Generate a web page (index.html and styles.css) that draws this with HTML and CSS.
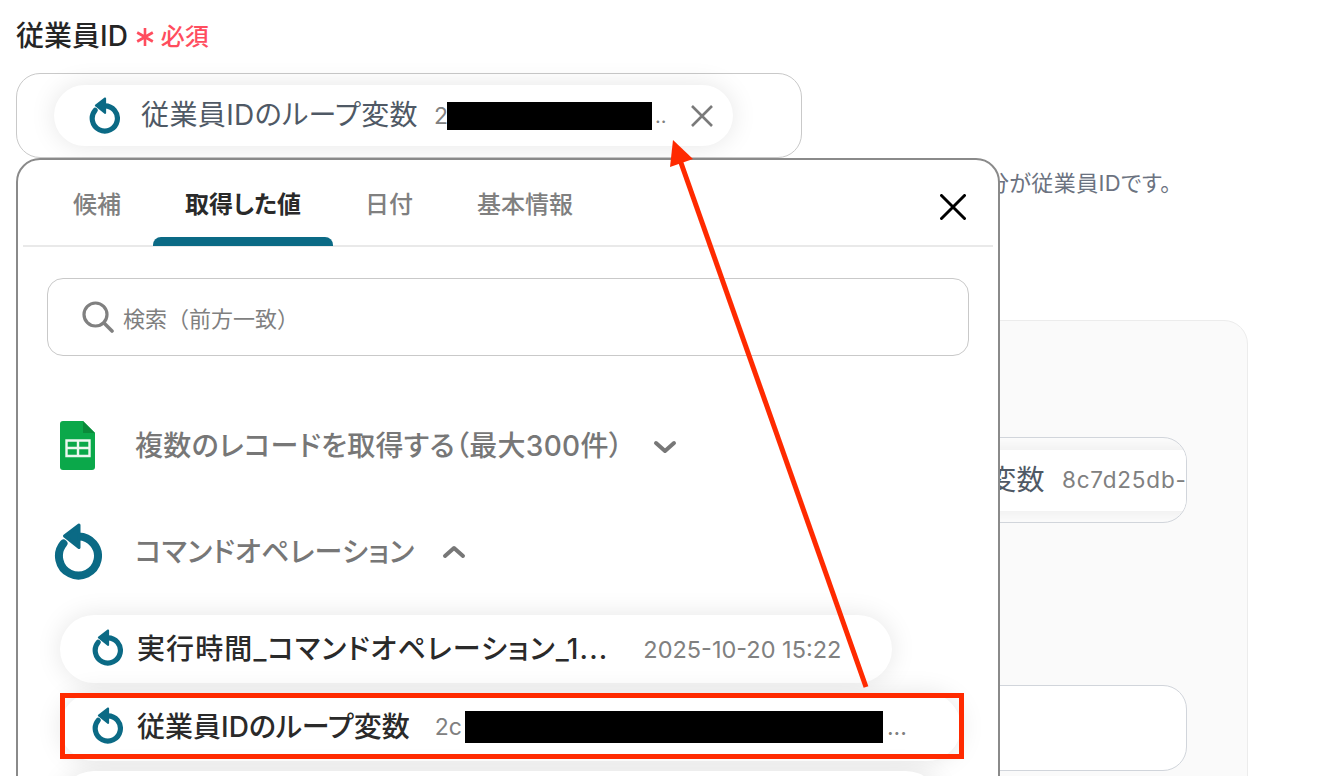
FILE: index.html
```html
<!DOCTYPE html>
<html lang="ja">
<head>
<meta charset="utf-8">
<title>従業員ID</title>
<link rel="stylesheet" href="styles.css">
</head>
<body>
<svg class="sprite" width="0" height="0" aria-hidden="true">
  <symbol id="loop" viewBox="0 0 48 57">
    <path d="M9.5 20.5A19.5 19.5 0 1 0 24 13.5" fill="none" stroke="currentColor" stroke-width="8" stroke-linecap="round"/>
    <path d="M25 2L10.500 13L25 24.500Z" fill="currentColor" stroke="currentColor" stroke-width="3" stroke-linejoin="round"/>
  </symbol>
</svg>
<main class="page">
  <div class="field-label">
    <span>従業員ID</span>
    <svg class="asterisk" viewBox="0 0 20 20"><path d="M10 1V19M2.200 5.500L17.800 14.500M17.800 5.500L2.200 14.500" stroke="currentColor" stroke-width="2.600"/></svg>
    <span class="required">必須</span>
  </div>
  <div class="input">
    <div class="chip">
      <svg class="chip-icon"><use href="#loop"/></svg>
      <span class="chip-name">従業員IDのループ変数</span>
      <span class="chip-value">2<i class="redact r1"></i><em>..</em></span>
      <svg class="chip-close" viewBox="0 0 24 24"><path d="M2 2L22 22M22 2L2 22" stroke="currentColor" stroke-width="2.600"/></svg>
    </div>
  </div>
  <p class="hint">分が従業員IDです。</p>
  <section class="panel">
    <div class="panel-input first">
      <div class="chip inner">
        <svg class="chip-icon"><use href="#loop"/></svg>
        <span class="chip-name">従業員IDのループ変数</span>
        <span class="chip-value plain">8c7d25db-</span>
      </div>
    </div>
    <div class="panel-input second"></div>
  </section>
</main>

<section class="popup">
  <header class="tabs">
    <span class="tab">候補</span>
    <span class="tab active">取得した値</span>
    <span class="tab">日付</span>
    <span class="tab">基本情報</span>
    <svg class="popup-close" viewBox="0 0 26 26"><path d="M1.500 1.500L24.500 24.500M24.500 1.500L1.500 24.500" stroke="currentColor" stroke-width="3" stroke-linecap="round"/></svg>
  </header>
  <div class="search">
    <svg class="search-icon" viewBox="0 0 32 32"><circle cx="13.500" cy="13.500" r="11.500" fill="none" stroke="currentColor" stroke-width="3.200"/><path d="M22 22L30 30" stroke="currentColor" stroke-width="3.600" stroke-linecap="round"/></svg>
    <span>検索（前方一致）</span>
  </div>
  <div class="group sheets">
    <svg class="sheet-icon" viewBox="0 0 35 49">
      <path d="M3 0H23L35 12V46A3 3 0 0 1 32 49H3A3 3 0 0 1 0 46V3A3 3 0 0 1 3 0Z" fill="#0ba84a"/>
      <path d="M23 0L35 12H23Z" fill="#0a8a3a"/>
      <path d="M6.500 19.500H29.500V35H6.500ZM18 19.500V35M6.500 27H29.500" fill="none" stroke="#eef8f1" stroke-width="2.400"/>
    </svg>
    <span class="group-name">複数のレコードを取得する（最大300件）</span>
    <svg class="chevron" viewBox="0 0 24 14"><path d="M3 3L12 11L21 3" fill="none" stroke="currentColor" stroke-width="4" stroke-linecap="round" stroke-linejoin="round"/></svg>
  </div>
  <div class="group command">
    <svg class="group-icon"><use href="#loop"/></svg>
    <span class="group-name">コマンドオペレーション</span>
    <svg class="chevron up" viewBox="0 0 24 14"><path d="M3 11L12 3L21 11" fill="none" stroke="currentColor" stroke-width="4" stroke-linecap="round" stroke-linejoin="round"/></svg>
  </div>
  <ul class="rows">
    <li class="row">
      <svg class="row-icon"><use href="#loop"/></svg>
      <span class="row-name short">実行時間_コマンドオペレーション_1...</span>
      <span class="row-value date">2025-10-20 15:22</span>
    </li>
    <li class="row wide">
      <svg class="row-icon"><use href="#loop"/></svg>
      <span class="row-name">従業員IDのループ変数</span>
      <span class="row-value">2c<i class="redact r2"></i><em>...</em></span>
    </li>
    <li class="row third"></li>
  </ul>
</section>

<div class="highlight"></div>
<svg class="arrow" viewBox="0 0 1330 776">
  <path d="M866 687L680 160" stroke="#ff2a00" stroke-width="5" fill="none"/>
  <path d="M673 140L670 167L693 159Z" fill="#ff2a00"/>
</svg>
</body>
</html>
```

FILE: styles.css
```css
* { box-sizing: border-box; }
html, body { margin: 0; height: 776px; overflow: hidden; background: #fff; }
body {
  position: relative;
  font-family: Inter, "Noto Sans CJK JP", sans-serif;
  font-feature-settings: "palt";
  color: #222;
}
.sprite { position: absolute; }
.page { padding: 12px 16px 0; }

.field-label {
  display: flex;
  align-items: center;
  height: 44px;
  font-size: 28px;
  font-weight: 500;
  color: #252525;
}
.asterisk { width: 20px; height: 20px; margin: 6px 0 0 7px; color: #ff4d5e; }
.required { margin-left: 6px; font-size: 24px; font-weight: 500; color: #ff4d5e; }

.input {
  display: flex;
  align-items: center;
  width: 786px;
  height: 85px;
  margin-top: 17px;
  padding-left: 37px;
  border: 1.5px solid #c9c9c9;
  border-radius: 24px;
}
.chip {
  display: flex;
  flex: none;
  align-items: center;
  width: 679px;
  height: 61px;
  padding-left: 35px;
  border-radius: 31px;
  background: #fff;
  box-shadow: 0 0 26px rgba(0, 0, 0, 0.1);
}
.chip-icon { flex: none; width: 31px; height: 37px; color: #0b6a85; }
.chip-name { margin: -5px 0 0 21px; font-size: 28px; letter-spacing: 0.4px; white-space: nowrap; color: #4f5965; }
.chip-value {
  display: flex;
  align-items: center;
  margin-left: 16px;
  font-size: 23px;
  color: #808080;
  white-space: nowrap;
}
.chip-value em { width: 21px; margin-left: 3px; font-style: normal; font-size: 20px; }
.chip-close { flex: none; width: 24px; height: 24px; margin-left: 14px; color: #7a7a7a; }
.redact { display: block; flex: none; background: #000; }
.r1 { width: 205px; height: 28px; margin-left: -1px; }
.r2 { width: 418px; height: 32px; margin-left: 3px; }

.hint {
  margin: 13px 0 0;
  padding-left: 971px;
  font-size: 22px;
  letter-spacing: 0.4px;
  line-height: 24px;
  color: #6b7280;
  white-space: nowrap;
}

.panel {
  width: 1232px;
  height: 600px;
  margin-top: 125px;
  padding: 116px 60px 0;
  border: 1.5px solid #ececec;
  border-radius: 24px;
  background: #fafafa;
}
.panel-input {
  display: flex;
  align-items: center;
  overflow: hidden;
  height: 86px;
  padding-left: 603px;
  border: 1.5px solid #d1d5db;
  border-radius: 24px;
  background: #fff;
}
.panel-input.second { margin-top: 162px; }
.chip.inner { width: 600px; }
.chip-value.plain { margin: -2px 0 0 17px; font-size: 22.500px; letter-spacing: 0.8px; }

.popup {
  position: absolute;
  top: 158px;
  left: 16px;
  width: 984px;
  height: 660px;
  padding: 0 5px;
  overflow: hidden;
  border: 2px solid #8a8a8a;
  border-radius: 24px;
  background: #fff;
}
.tabs {
  display: flex;
  align-items: flex-start;
  height: 87px;
  border-bottom: 2px solid #e9e9e9;
  padding: 28px 0 0 50px;
}
.tab {
  position: relative;
  margin-right: 64px;
  font-size: 24px;
  font-weight: 500;
  line-height: 34px;
  color: #808080;
}
.tab.active { color: #2a2a2a; font-weight: 700; }
.tab.active::after {
  content: "";
  position: absolute;
  left: -32px;
  right: -32px;
  top: 49px;
  height: 9px;
  border-radius: 8px 8px 0 0;
  background: #0b6a85;
}
.popup-close { width: 26px; height: 26px; margin: 6px 27px 0 auto; color: #000; flex: none; }

.search {
  display: flex;
  align-items: center;
  width: 922px;
  height: 78px;
  margin: 31px 0 0 24px;
  padding-left: 34px;
  border: 1.5px solid #c9c9c9;
  border-radius: 16px;
  font-size: 22px;
  font-feature-settings: normal;
  color: #808080;
}
.search-icon { width: 32px; height: 32px; margin-right: 9px; color: #808080; }

.group {
  display: flex;
  align-items: center;
  font-size: 28px;
  font-weight: 500;
  letter-spacing: 0.3px;
  color: #777;
}
.group-name { margin-top: -3px; white-space: nowrap; }
.sheets { height: 50px; margin: 64px 0 0 37px; }
.sheet-icon { width: 35px; height: 49px; margin-right: 40px; flex: none; }
.command { height: 58px; margin: 52px 0 0 31px; }
.group-icon { width: 48px; height: 57px; margin-right: 33px; flex: none; color: #0b6a85; }
.chevron { width: 24px; height: 14px; margin-left: 30px; margin-top: 4px; color: #777; flex: none; }
.chevron.up { margin-left: 27px; margin-top: 2px; }

.rows {
  display: flex;
  flex-direction: column;
  align-items: flex-start;
  gap: 10px;
  margin: 35px 0 0 37px;
  padding: 0;
  list-style: none;
}
.row {
  display: flex;
  align-items: center;
  height: 68px;
  padding: 0 51px 0 32px;
  border-radius: 34px;
  background: #fff;
  box-shadow: 0 0 26px rgba(0, 0, 0, 0.1);
}
.row.wide { padding-right: 54px; }
.row.third { width: 880px; }
.row-icon { width: 31px; height: 37px; margin-top: -3px; flex: none; color: #0b6a85; }
.row-name { margin: -4px 0 0 14px; font-size: 28px; font-weight: 500; white-space: nowrap; color: #2a2a2a; }
.row-name.short { letter-spacing: 1.1px; }
.row-value {
  display: flex;
  align-items: center;
  margin-left: 25px;
  font-size: 23px;
  white-space: nowrap;
  color: #808080;
}
.row-value em { margin-left: 4px; font-style: normal; }
.row-value.date { margin-left: 35px; font-size: 23.500px; }

.highlight {
  position: absolute;
  top: 693px;
  left: 60px;
  width: 904px;
  height: 66px;
  border: 5px solid #ff2a00;
}
.arrow { position: absolute; top: 0; left: 0; width: 1330px; height: 776px; pointer-events: none; }
```
